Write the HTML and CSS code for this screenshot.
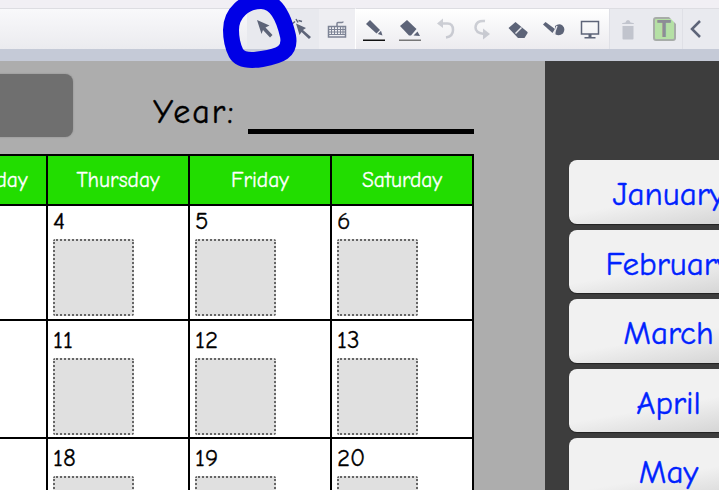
FILE: index.html
```html
<!DOCTYPE html>
<html lang="en-US">
<head>
  <meta charset="UTF-8" />
  <title>Calendar activity</title>
  <link rel="stylesheet" href="styles.css">
</head>
<body>
  <header class="toolbar">
    <div class="tool-group selected">
      <button class="tool"><svg width="24" height="24" viewBox="0 0 24 24"><path class="ink" d="M4 3 L16.500 8.500 L12.500 10.500 L19.500 18 L17 20.500 L10 13 L8.500 17 Z"/></svg></button>
      <button class="tool"><svg width="24" height="24" viewBox="0 0 24 24"><path class="ink" d="M7 6.500 L17 11 L14 13 L22 20 L20 22 L12.500 15 L10.500 18 Z"/><path class="line" d="M7 2 L9 5.500 M9.500 3.500 L13 4.500 M3 7 L6 4.500"/></svg></button>
    </div>
    <div class="tool-group keys">
      <button class="tool"><svg width="24" height="24" viewBox="0 0 24 24"><path class="line soft" d="M3.500 9.500 H20.500 V20 H3.500 Z M12 9.500 V6.500 Q12 5.500 13 5.500 H17 Q18 5.500 18 4.500"/><path class="line thin soft" d="M3.500 12.500 H20.500 M3.500 15 H20.500 M3.500 17.500 H20.500 M6.500 9.500 V17.500 M9.500 9.500 V17.500 M12.500 9.500 V17.500 M15.500 9.500 V17.500 M18 9.500 V17.500"/></svg></button>
    </div>
    <div class="tool-group drawing">
      <button class="tool"><svg width="24" height="24" viewBox="0 0 24 24"><path class="ink" d="M4 7 L8 3 L18 13 L14.500 16.500 Z"/><path class="ink" d="M15.800 17 L19 13.800 L20.500 18.500 Z"/><rect x="1" y="22.500" width="22" height="2" fill="#111"/></svg></button>
      <button class="tool"><svg width="24" height="24" viewBox="0 0 24 24"><path class="ink" d="M2 9 L9 3 L18.500 12 L13 18.500 L11 18.500 Z"/><path class="ink" d="M15.500 18.500 L19.500 14.500 L22 19 Z"/><rect x="1" y="22.500" width="22" height="2" fill="#777"/></svg></button>
      <button class="tool"><svg class="faded" width="24" height="24" viewBox="0 0 24 24"><path class="line wide" d="M7 6.500 H13.500 Q19 6.500 19 13 Q19 19.500 12 20.500"/><path class="ink" d="M9 1.500 L9 11 L3 6.500 Z"/></svg></button>
      <button class="tool"><svg class="faded" width="24" height="24" viewBox="0 0 24 24"><path class="line wide" d="M15 4 Q6 3 5.500 10.500 Q5.500 16 14 17"/><path class="ink" d="M13 11.500 L20 17 L13 22.500 Z"/></svg></button>
      <button class="tool"><svg width="24" height="24" viewBox="0 0 24 24"><path class="ink" d="M2.500 11 L9.500 5 L21.500 15 Q22 16 21 17 L18.500 21 H12 Z"/><path class="gap" d="M9.500 16.500 L15.500 10.500"/></svg></button>
      <button class="tool"><svg width="24" height="24" viewBox="0 0 24 24"><path class="ink" d="M1 7.500 L3.500 5 L13 12 L10.500 16 Z"/><path class="ink" d="M13 9 Q17 6 20.500 8.500 Q24 12 21 16.500 Q17.500 19.500 13.500 17.500 Z"/><path class="gap" d="M15 9 L11.500 18"/></svg></button>
      <button class="tool"><svg width="24" height="24" viewBox="0 0 24 24"><path class="line" d="M3.500 4.500 H20.500 V17 H3.500 Z"/><path class="ink" d="M10.500 17 H13.500 V20 H17.500 V21.500 H6.500 V20 H10.500 Z"/></svg></button>
    </div>
    <div class="tool-group extras">
      <button class="tool"><svg class="faded" width="24" height="24" viewBox="0 0 24 24"><path class="ink" d="M6.500 9 H17.500 V21.500 Q17.500 22.500 16.500 22.500 H7.500 Q6.500 22.500 6.500 21.500 Z M6 7 Q6 5.500 9.500 5.500 Q10 3 12 3 Q14 3 14.500 5.500 Q18 5.500 18 7 Z"/></svg></button>
      <button class="tool"><span class="text-tool"><span class="text-tool-t">T</span></span></button>
    </div>
    <div class="tool-group collapse">
      <button class="tool chevron"><svg width="24" height="24" viewBox="0 0 24 24"><path class="line wide" d="M15 4 L7 12 L15 20" fill="none"/></svg></button>
    </div>
  </header>
  <div class="toolbar-edge"></div>

  <main class="stage">
    <section class="sheet">
      <div class="sheet-head">
        <div class="month-slot"></div>
        <div class="year-label">Year:</div>
        <div class="year-line"></div>
      </div>
      <div class="calendar">
        <div class="day-name">Wednesday</div>
        <div class="day-name">Thursday</div>
        <div class="day-name">Friday</div>
        <div class="day-name">Saturday</div>

        <div class="cell first-week"></div>
        <div class="cell first-week">4<div class="drop"></div></div>
        <div class="cell first-week">5<div class="drop"></div></div>
        <div class="cell first-week">6<div class="drop"></div></div>

        <div class="cell"></div>
        <div class="cell">11<div class="drop"></div></div>
        <div class="cell">12<div class="drop"></div></div>
        <div class="cell">13<div class="drop"></div></div>

        <div class="cell"></div>
        <div class="cell">18<div class="drop"></div></div>
        <div class="cell">19<div class="drop"></div></div>
        <div class="cell">20<div class="drop"></div></div>
      </div>
    </section>
    <aside class="months">
      <button class="month">January</button>
      <button class="month">February</button>
      <button class="month">March</button>
      <button class="month">April</button>
      <button class="month">May</button>
    </aside>
  </main>

  <!-- hand drawn circle sitting on top of the toolbar -->
  <svg class="scribble" width="100" height="80" viewBox="215 0 100 80"><path d="M231 30 C231 13 245 1 261 1 C275 1 283 14 288 36 C291 52 280 56 262 59 C250 61 240 60 236 53 C232 45 231 40 231 30 Z"/></svg>
</body>
</html>
```

FILE: styles.css
```css
* { box-sizing: border-box; }
body {
  margin: 0;
  height: 490px;
  overflow: hidden;
  position: relative;
  font-family: "Comic Sans MS", "Comic Neue", "Open Sans", sans-serif;
  background: #adadad;
}
button {
  font-family: inherit;
  border: none;
  padding: 0;
  background: none;
}

.toolbar {
  display: flex;
  justify-content: flex-end;
  height: 49px;
  background: linear-gradient(#f9f9fb, #ebebef);
  border-top: 8px solid #f1eff4;
  box-shadow: inset 0 1px 0 #dddde2;
}
.toolbar-edge {
  height: 12px;
  background: #c5cad7;
}
.tool-group {
  display: flex;
  border-top: 1px solid #dddde2;
}
.tool-group.selected { background: #e8e9ee; }
.tool-group.keys { background: #eeeef2; border-right: 1px solid #fff; }
.tool-group.drawing {
  background: linear-gradient(#fff, #ecebef);
  border-right: 1px solid #dfe0e6;
  padding-right: 1px;
}
.tool-group.extras { background: #e9eaef; border-right: 1px solid #dfe0e6; }
.tool-group.collapse { background: #e9eaef; }

.tool {
  width: 36px;
  display: flex;
  align-items: center;
  justify-content: center;
}
.chevron { padding-right: 8px; }
.ink { fill: #5d6478; }
.line { fill: none; stroke: #5d6478; stroke-width: 1.500; }
.line.thin { stroke-width: 1; }
.line.wide { stroke-width: 2.500; }
.line.soft { stroke: #7d8395; }
.gap { fill: none; stroke: #e9e9ee; stroke-width: 1.500; }
.faded { opacity: 0.28; }

.text-tool {
  position: relative;
  width: 23px;
  height: 24px;
  display: flex;
  align-items: center;
  justify-content: center;
  background: #b5e0a5;
  border: 2px solid #a7aca8;
  border-radius: 3px;
}
.text-tool::after {
  content: "";
  position: absolute;
  top: -2px;
  right: -2px;
  border-top: 7px solid #e9eaef;
  border-left: 7px solid transparent;
}
.text-tool-t {
  font: bold 23px "Liberation Sans", sans-serif;
  color: #8d8d96;
}

.stage {
  display: flex;
  height: 429px;
}
.sheet {
  flex: none;
  width: 545px;
  background: #adadad;
  overflow: hidden;
}
.sheet-head {
  display: flex;
  height: 93px;
}
.month-slot {
  flex: none;
  width: 100px;
  height: 63px;
  margin: 13px 0 0 -27px;
  background: #6f6f6f;
  border-radius: 8px;
  box-shadow: 0 0 2px #888;
}
.year-label {
  margin: 30px 0 0 80px;
  font-size: 34px;
  letter-spacing: 2px;
  line-height: 42px;
  height: 42px;
  color: #000;
  -webkit-text-stroke: 0.4px #000;
}
.year-line {
  width: 226px;
  height: 5px;
  margin: 68px 0 0 13px;
  background: #000;
}

.calendar {
  display: grid;
  grid-template-columns: repeat(4, 142px);
  grid-template-rows: 50px 115px 118px 118px;
  width: 568px;
  margin-left: -94px;
  border-top: 2px solid #000;
}
.day-name {
  display: flex;
  align-items: center;
  justify-content: center;
  background: #22dd00;
  color: #fff;
  font-size: 21.500px;
  -webkit-text-stroke: 0.3px #fff;
  border-right: 2px solid #000;
  border-bottom: 2px solid #000;
}
.cell {
  padding: 8px 0 0 5px;
  background: #fff;
  color: #000;
  font-size: 25px;
  line-height: 22px;
  -webkit-text-stroke: 0.3px #000;
  border-right: 2px solid #000;
  border-bottom: 2px solid #000;
}
.cell.first-week { padding-top: 4px; }
.drop {
  width: 81px;
  height: 77px;
  margin-top: 7px;
  background: #e0e0e0;
  border: 2px dotted #666;
  border-radius: 2px;
}

.months {
  flex: none;
  width: 174px;
  display: flex;
  flex-direction: column;
  gap: 6px;
  padding: 99px 0 0 24px;
  background: #3d3d3d;
}
.month {
  flex: none;
  width: 199px;
  height: 63.500px;
  padding-top: 5px;
  color: #0022ff;
  font-size: 33px;
  -webkit-text-stroke: 0.4px #0022ff;
  text-align: center;
  background: linear-gradient(170deg, #f1f1f1 55%, #cfcfcf);
  border-radius: 8px;
  box-shadow: 0 1px 1px #222;
}

.scribble {
  position: absolute;
  top: 0;
  left: 215px;
}
.scribble path {
  fill: none;
  stroke: #0000e6;
  stroke-width: 16;
}
```
